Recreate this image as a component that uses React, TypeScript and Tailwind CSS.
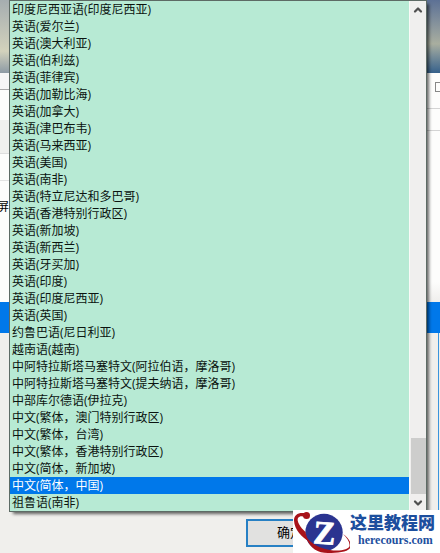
import { ChevronDown, ChevronUp } from "lucide-react";
import { clsx } from "clsx";

const LANGUAGES = [
    "印度尼西亚语(印度尼西亚)",
    "英语(爱尔兰)",
    "英语(澳大利亚)",
    "英语(伯利兹)",
    "英语(菲律宾)",
    "英语(加勒比海)",
    "英语(加拿大)",
    "英语(津巴布韦)",
    "英语(马来西亚)",
    "英语(美国)",
    "英语(南非)",
    "英语(特立尼达和多巴哥)",
    "英语(香港特别行政区)",
    "英语(新加坡)",
    "英语(新西兰)",
    "英语(牙买加)",
    "英语(印度)",
    "英语(印度尼西亚)",
    "英语(英国)",
    "约鲁巴语(尼日利亚)",
    "越南语(越南)",
    "中阿特拉斯塔马塞特文(阿拉伯语，摩洛哥)",
    "中阿特拉斯塔马塞特文(提夫纳语，摩洛哥)",
    "中部库尔德语(伊拉克)",
    "中文(繁体，澳门特别行政区)",
    "中文(繁体，台湾)",
    "中文(繁体，香港特别行政区)",
    "中文(简体，新加坡)",
    "中文(简体，中国)",
    "祖鲁语(南非)",
];

const SELECTED = "中文(简体，中国)";

// Windows and dialog behind the open dropdown
function Backdrop() {
    return (
        <div className="flex h-full flex-col">
            <div className="flex h-[73px] shrink-0 justify-between">
                <div className="w-[9px] bg-linear-to-b from-[#a5adb0] via-[#d3d2bc] via-70% to-[#8d9aa4]" />
                <div className="w-[14px] bg-linear-to-b from-[#5d7195] via-[#a9ae9f] via-60% to-[#36618b]" />
            </div>

            <div className="flex h-[229px] shrink-0 justify-between">
                <div className="flex w-[9px] flex-col overflow-hidden bg-[#fdfdfc]">
                    <div className="h-[17px] border-b border-[#a9a9a9] bg-[#f6f6f6]" />
                    <div className="h-[30px]" />
                    <div className="h-[34px] border-b border-[#dedede] bg-[#f0f0ee]" />
                    <div className="h-[27px] border-b border-[#e3e3e3]" />
                    <div className="mt-[17px] -ml-[3px] text-[12px] leading-[17px] whitespace-nowrap text-black">屏幕</div>
                </div>
                <div className="flex w-[14px] flex-col overflow-hidden bg-[#fdfdfc]">
                    <div className="h-[36px] border-b border-[#d4d4d4] pt-[9px] pl-[9px]">
                        <div className="size-[10px] border border-[#888888]" />
                    </div>
                    <div className="h-[22px] border-b border-[#d4d4d4]" />
                    <div className="mt-auto h-5 bg-linear-to-b from-[#fdfdfc] to-[#efeeec]" />
                </div>
            </div>

            <div className="h-[31px] shrink-0 bg-[#0078ea]" />

            <div className="mr-px flex flex-1 flex-col border-r border-[#3a94dc] bg-[#f0efec]">
                <div className="mt-[186px] ml-[246px] flex h-[28px] w-[88px] items-center justify-center border-2 border-[#2780c4] bg-[#e1e1e0] text-[13px] text-black">
                    确定
                </div>
            </div>
        </div>
    );
}

function Scrollbar() {
    return (
        <div className="flex w-[17px] flex-col items-center border-l border-[#fafaf8] bg-[#f0efee] text-[#505050]">
            <div className="flex h-[17px] items-center justify-center">
                <ChevronUp className="size-[12px]" strokeWidth={4.5} />
            </div>
            <div className="mt-[420px] h-[56px] w-[15px] bg-[#cdcdcc]" />
            <div className="flex h-[17px] items-center justify-center">
                <ChevronDown className="size-[12px]" strokeWidth={4.5} />
            </div>
        </div>
    );
}

function LanguageList() {
    return (
        <div className="absolute top-0 left-[9px] flex h-[512px] w-[418px] border border-[#5d6b65] bg-[#b7ead4] shadow-[3px_3px_3px_-1px_rgba(0,0,0,0.6)]">
            <ul className="flex-1">
                {LANGUAGES.map((name) => (
                    <li
                        key={name}
                        className={clsx(
                            "h-[17px] pl-[2px] text-[12px] leading-[17px] whitespace-nowrap",
                            name === SELECTED ? "bg-[#0078ea] text-white" : "text-[#0b1410]"
                        )}
                    >
                        {name}
                    </li>
                ))}
            </ul>
            <Scrollbar />
        </div>
    );
}

function SiteBadge() {
    return (
        <div className="absolute right-0 bottom-0 flex h-[43px] w-[147px] bg-white">
            <svg className="h-[43px] w-[57px] shrink-0" viewBox="0 0 57 43">
                <circle cx="31" cy="22.500" r="18.700" fill="#2b3490" />
                {/* orbit */}
                <path
                    d="M13 3.500C6 2 1 4.500 1 10.500C1.500 20 9 27.500 16 31.500C14 28 13 25 12.500 22C7 17 3.500 11 5 8C6.500 6 9 6 12 7Z"
                    fill="#a8131a"
                />
                <path
                    d="M13 27C18 33.500 27 38.500 37 40C47 41.500 56 39.500 56.500 36C57 32 54 28 50 24C56 28 59 34 57.500 37.500C55 42 45 43 35 43C25 43 17 39 13 27Z"
                    fill="#a8131a"
                />
                <circle cx="13.500" cy="5.500" r="3.500" fill="#a8131a" />
                <text
                    x="31.500"
                    y="34"
                    textAnchor="middle"
                    fontFamily="Liberation Serif, serif"
                    fontWeight="700"
                    fontSize="33"
                    fill="#fff"
                    stroke="#fff"
                    strokeWidth="0.8"
                    transform="rotate(4 31 23)"
                >
                    Z
                </text>
            </svg>
            <div className="flex flex-col whitespace-nowrap text-[#1d4f9e]">
                <span className="mt-[3px] text-[17px] leading-[20px] font-black">这里教程网</span>
                <span className="ml-[8px] font-['Liberation_Serif',serif] text-[12px] leading-[14px] font-bold">
                    herecours.com
                </span>
            </div>
        </div>
    );
}

export default function App() {
    return (
        <div className="relative h-[553px] w-[440px] overflow-hidden bg-[#f0efec] font-['Open_Sans','Noto_Sans_CJK_SC',sans-serif]">
            <Backdrop />
            <LanguageList />
            <SiteBadge />
        </div>
    );
}
